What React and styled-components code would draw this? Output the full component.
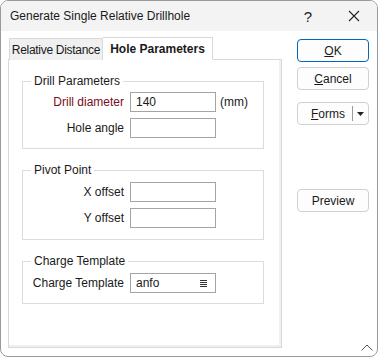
import styled, { createGlobalStyle } from "styled-components";

const Global = createGlobalStyle`
  html, body { margin: 0; padding: 0; background: #fff; }
  * { box-sizing: border-box; }
  body { font-family: "Liberation Sans", Arial, sans-serif; font-size: 12px; color: #1a1a1a; }
`;

const Window = styled.div`
  width: 378px;
  height: 357px;
  border: 1px solid #9a9a9a;
  border-radius: 8px;
  overflow: hidden;
  background: #fff;
  display: flex;
  flex-direction: column;
`;

const TitleBar = styled.div`
  height: 30px;
  background: #f3f3f3;
  display: flex;
  align-items: center;
  padding-left: 9px;
`;

const Title = styled.div`
  flex: 1;
  font-size: 12px;
`;

const TitleBtn = styled.div`
  width: ${(p) => p.w}px;
  display: flex;
  justify-content: center;
  align-items: center;
  font-size: 15px;
  color: #222;
`;

const Body = styled.div`
  flex: 1;
  display: flex;
  position: relative;
`;

const TabArea = styled.div`
  margin: 5px 0 0 7px;
  width: 274px;
  display: flex;
  flex-direction: column;
`;

const TabRow = styled.div`
  display: flex;
  align-items: flex-end;
  height: 23px;
  padding-left: 1px;
`;

const Tab = styled.div`
  width: ${(p) => p.w}px;
  flex-shrink: 0;
  white-space: nowrap;
  height: ${(p) => (p.active ? 23 : 22)}px;
  display: flex;
  align-items: center;
  justify-content: center;
  border: 1px solid #d9d9d9;
  border-bottom: ${(p) => (p.active ? "1px solid #fff" : "none")};
  border-left: ${(p) => (p.active ? "none" : "1px solid #d9d9d9")};
  background: ${(p) => (p.active ? "#fff" : "#f0f0f0")};
  font-weight: ${(p) => (p.active ? 700 : 400)};
  font-size: 12px;
  letter-spacing: ${(p) => (p.active ? 0 : -0.3)}px;
  margin-bottom: -1px;
  position: relative;
  z-index: ${(p) => (p.active ? 1 : 0)};
`;

const Panel = styled.div`
  height: 289px;
  border: 1px solid #d9d9d9;
  box-shadow: inset -2px -2px 0 #f0f0f0;
  padding: 21px 17px 0 13px;
  display: flex;
  flex-direction: column;
  gap: 21px;
`;

const Group = styled.div`
  position: relative;
  border: 1px solid #dcdcdc;
  height: ${(p) => p.h}px;
  padding: ${(p) => p.pt}px 0 0 0;
  display: flex;
  flex-direction: column;
  gap: 6px;
`;

const Legend = styled.div`
  position: absolute;
  top: -8px;
  left: 8px;
  padding: 0 3px;
  background: #fff;
  line-height: 15px;
`;

const Row = styled.div`
  display: flex;
  align-items: center;
  height: 20px;
`;

const Label = styled.div`
  width: 107px;
  text-align: right;
  padding-right: 6px;
  white-space: nowrap;
  color: ${(p) => (p.required ? "#7a0d1d" : "#1a1a1a")};
`;

const Field = styled.div`
  width: 86px;
  height: 20px;
  border: 1px solid #a4a4a4;
  display: flex;
  align-items: center;
  justify-content: space-between;
  padding: 0 8px 0 5px;
  background: #fff;
`;

const Unit = styled.div`
  margin-left: 4px;
`;

const Side = styled.div`
  margin: 8px 0 0 15px;
  display: flex;
  flex-direction: column;
  width: 72px;
`;

const Button = styled.div`
  height: 23px;
  margin-top: ${(p) => p.mt || 0}px;
  border: 1px solid ${(p) => (p.primary ? "#0067c0" : "#d0d0d0")};
  border-radius: 4px;
  background: #fdfdfd;
  display: flex;
  align-items: center;
  justify-content: center;
  font-size: 12px;
  color: #1a1a1a;
  u { text-decoration: underline; }
`;

const SplitText = styled.div`
  flex: 1;
  text-align: center;
  padding-left: 6px;
`;

const SplitArrow = styled.div`
  width: 16px;
  height: 15px;
  border-left: 1px solid #9a9a9a;
  display: flex;
  align-items: center;
  justify-content: center;
`;

const Grip = styled.svg`
  position: absolute;
  right: 4px;
  bottom: 5px;
`;

export default function App() {
  return (
    <>
      <Global />
      <Window>
        <TitleBar>
          <Title>Generate Single Relative Drillhole</Title>
          <TitleBtn w={46}>?</TitleBtn>
          <TitleBtn w={46}>
            <svg width="12" height="12" viewBox="0 0 12 12">
              <path d="M1 1 L11 11 M11 1 L1 11" stroke="#222" strokeWidth="1.1" />
            </svg>
          </TitleBtn>
        </TitleBar>
        <Body>
          <TabArea>
            <TabRow>
              <Tab w={94}>Relative Distance</Tab>
              <Tab w={110} active>Hole Parameters</Tab>
            </TabRow>
            <Panel>
              <Group h={68} pt={10}>
                <Legend>Drill Parameters</Legend>
                <Row>
                  <Label required>Drill diameter</Label>
                  <Field>140</Field>
                  <Unit>(mm)</Unit>
                </Row>
                <Row>
                  <Label>Hole angle</Label>
                  <Field />
                </Row>
              </Group>
              <Group h={70} pt={11}>
                <Legend>Pivot Point</Legend>
                <Row>
                  <Label>X offset</Label>
                  <Field />
                </Row>
                <Row>
                  <Label>Y offset</Label>
                  <Field />
                </Row>
              </Group>
              <Group h={43} pt={11}>
                <Legend>Charge Template</Legend>
                <Row>
                  <Label>Charge Template</Label>
                  <Field>
                    anfo
                    <svg width="7" height="7" viewBox="0 0 7 7">
                      <path d="M0 0.5 H7 M0 2.5 H7 M0 4.5 H7 M0 6.5 H7" stroke="#333" strokeWidth="1" />
                    </svg>
                  </Field>
                </Row>
              </Group>
            </Panel>
          </TabArea>
          <Side>
            <Button primary><u>O</u>K</Button>
            <Button mt={5}><u>C</u>ancel</Button>
            <Button mt={12}>
              <SplitText><u>F</u>orms</SplitText>
              <SplitArrow>
                <svg width="7" height="4" viewBox="0 0 7 4">
                  <path d="M0 0 H7 L3.5 4 Z" fill="#222" />
                </svg>
              </SplitArrow>
            </Button>
            <Button mt={64}>Preview</Button>
          </Side>
          <Grip width="12" height="7" viewBox="0 0 12 7">
            <path d="M0.5 6.5 L6 1 L11.5 6.5" stroke="#555" strokeWidth="1" fill="none" />
          </Grip>
        </Body>
      </Window>
    </>
  );
}
